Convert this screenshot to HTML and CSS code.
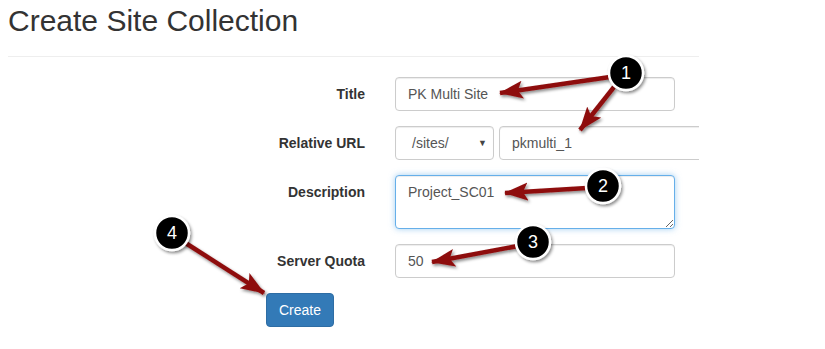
FILE: index.html
```html
<!DOCTYPE html>
<html lang="en">
<head>
    <meta charset="UTF-8">
    <title>Create Site Collection</title>
    <link rel="stylesheet" href="styles.css">
</head>
<body>
<div class="page">
    <h1 class="page-title">Create Site Collection</h1>
    <div class="divider"></div>

    <form class="site-form">
        <div class="form-row">
            <label class="control-label">Title</label>
            <input class="form-control" type="text" value="PK Multi Site">
        </div>
        <div class="form-row">
            <label class="control-label">Relative URL</label>
            <div class="url-group">
                <div class="form-control select-box">
                    <span>/sites/</span>
                    <span class="caret">&#9660;</span>
                </div>
                <input class="form-control" type="text" value="pkmulti_1">
            </div>
        </div>
        <div class="form-row">
            <label class="control-label">Description</label>
            <textarea class="form-control focused">Project_SC01</textarea>
        </div>
        <div class="form-row">
            <label class="control-label">Server Quota</label>
            <input class="form-control" type="text" value="50">
        </div>
        <div class="button-row">
            <button type="button" class="btn-primary">Create</button>
        </div>
    </form>
</div>

<!-- Callouts -->
<svg class="callouts" width="825" height="349" viewBox="0 0 825 349">
    <defs>
        <filter id="shadow" x="-30%" y="-30%" width="160%" height="160%">
            <feDropShadow dx="1.5" dy="2" stdDeviation="1.5" flood-color="#000" flood-opacity="0.45"/>
        </filter>
        <marker id="head" markerUnits="userSpaceOnUse" markerWidth="26" markerHeight="20"
                refX="23" refY="9" orient="auto">
            <path d="M0,0 L24,9 L0,18 L5,9 Z" fill="#8e1010"/>
        </marker>
    </defs>
    <g class="arrows" filter="url(#shadow)">
        <line x1="610" y1="77" x2="500" y2="93" marker-end="url(#head)"/>
        <line x1="614" y1="87" x2="580" y2="130" marker-end="url(#head)"/>
        <line x1="587" y1="188" x2="505" y2="193" marker-end="url(#head)"/>
        <line x1="518" y1="246" x2="432" y2="262" marker-end="url(#head)"/>
        <line x1="184" y1="242" x2="264" y2="293" marker-end="url(#head)"/>
    </g>
    <g class="badges" filter="url(#shadow)">
        <circle cx="626" cy="73" r="17"/>
        <circle cx="603" cy="186" r="17"/>
        <circle cx="533" cy="242" r="17"/>
        <circle cx="172" cy="233" r="17"/>
    </g>
    <g class="badge-text">
        <text x="626" y="79">1</text>
        <text x="603" y="192">2</text>
        <text x="533" y="248">3</text>
        <text x="172" y="239">4</text>
    </g>
</svg>
</body>
</html>
```

FILE: styles.css
```css
/* Global styles */
* {
    box-sizing: border-box;
}

body {
    margin: 0;
    position: relative;
    font-family: "Liberation Sans", Arial, sans-serif;
    font-size: 14px;
    color: #333;
    background-color: white;
}

.page {
    width: 691px;
    margin-left: 8px;
    overflow: hidden;
}

/* Header */
.page-title {
    margin: 4px 0 0;
    font-size: 30px;
    font-weight: normal;
    line-height: 33px;
}

.divider {
    border-top: 1px solid #eee;
    margin: 19px 0 20px;
}

/* Form */
.form-row {
    display: grid;
    grid-template-columns: 357px 280px;
    column-gap: 30px;
    margin-bottom: 15px;
}

.control-label {
    text-align: right;
    font-weight: bold;
    padding-top: 7px;
    line-height: 20px;
}

.form-control {
    display: block;
    width: 100%;
    height: 34px;
    padding: 6px 12px;
    border: 1px solid #ccc;
    border-radius: 4px;
    font-family: "Liberation Sans", Arial, sans-serif;
    font-size: 14px;
    line-height: 20px;
    color: #555;
    background-color: white;
    box-shadow: inset 0 1px 1px rgba(0, 0, 0, 0.075);
}

textarea.form-control {
    height: 54px;
    resize: vertical;
}

.form-control.focused {
    border-color: #66afe9;
    outline: 0;
    box-shadow: inset 0 1px 1px rgba(0, 0, 0, 0.075), 0 0 6px rgba(102, 175, 233, 0.6);
}

.url-group {
    display: flex;
    gap: 5px;
    width: 420px;
}

.select-box {
    flex: 0 0 99px;
    display: flex;
    justify-content: space-between;
    align-items: center;
    padding: 6px 6px 6px 16px;
}

.caret {
    font-size: 9px;
    color: #444;
}

.button-row {
    padding-left: 258px;
}

.btn-primary {
    height: 34px;
    padding: 6px 12px;
    border: 1px solid #2e6da4;
    border-radius: 4px;
    background-color: #337ab7;
    color: white;
    font-family: "Liberation Sans", Arial, sans-serif;
    font-size: 14px;
    line-height: 20px;
}

/* Callouts */
.callouts {
    position: absolute;
    top: 0;
    left: 0;
    pointer-events: none;
}

.arrows line {
    stroke: #8e1010;
    stroke-width: 4.5;
}

.badges circle {
    fill: black;
    stroke: white;
    stroke-width: 2.5;
}

.badge-text text {
    fill: white;
    font-family: "Liberation Sans", Arial, sans-serif;
    font-size: 18px;
    text-anchor: middle;
}
```
